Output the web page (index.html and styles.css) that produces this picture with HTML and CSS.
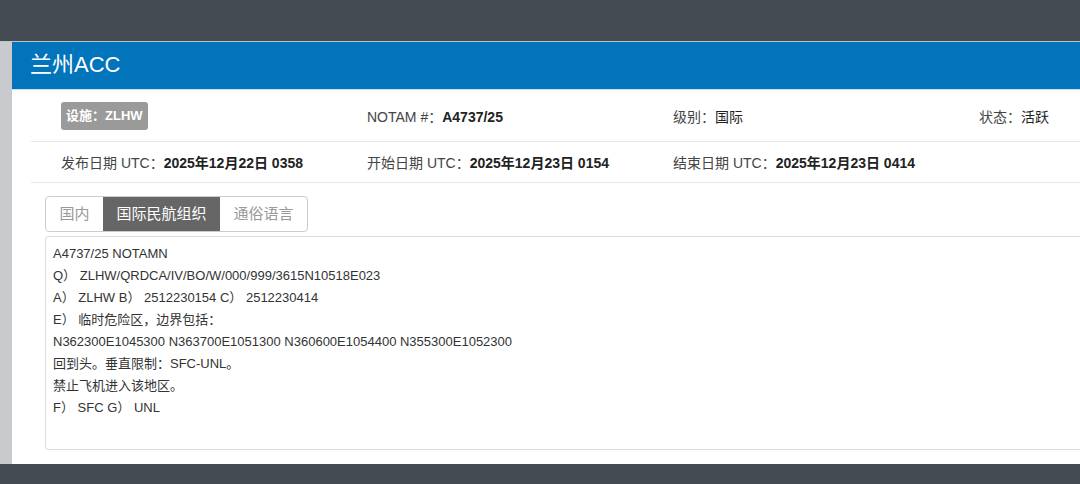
FILE: index.html
```html
<!DOCTYPE html>
<html lang="zh-CN">
<head>
    <meta charset="UTF-8">
    <meta name="viewport" content="width=device-width, initial-scale=1.0">
    <title>兰州ACC</title>
    <link rel="stylesheet" href="styles.css">
</head>
<body>
    <div class="topbar"></div>
    <div class="page">
        <div class="panel">
            <div class="panel-head">兰州ACC</div>
            <div class="panel-body">
                <div class="info-row first">
                    <div class="cell"><span class="badge">设施：ZLHW</span></div>
                    <div class="cell">NOTAM #：<b>A4737/25</b></div>
                    <div class="cell">级别：<span class="val">国际</span></div>
                    <div class="cell">状态：<span class="val">活跃</span></div>
                </div>
                <div class="info-row">
                    <div class="cell">发布日期 UTC：<b>2025年12月22日 0358</b></div>
                    <div class="cell">开始日期 UTC：<b>2025年12月23日 0154</b></div>
                    <div class="cell">结束日期 UTC：<b>2025年12月23日 0414</b></div>
                </div>

                <div class="tabs-wrap">
                    <div class="tabs">
                        <span class="tab">国内</span>
                        <span class="tab active">国际民航组织</span>
                        <span class="tab">通俗语言</span>
                    </div>
                    <div class="notam-text">
                        <div>A4737/25 NOTAMN</div>
                        <div>Q） ZLHW/QRDCA/IV/BO/W/000/999/3615N10518E023</div>
                        <div>A） ZLHW B） 2512230154 C） 2512230414</div>
                        <div>E） 临时危险区，边界包括：</div>
                        <div>N362300E1045300 N363700E1051300 N360600E1054400 N355300E1052300</div>
                        <div>回到头。垂直限制：SFC-UNL。</div>
                        <div>禁止飞机进入该地区。</div>
                        <div>F） SFC G） UNL</div>
                    </div>
                </div>
            </div>
        </div>
    </div>
    <div class="bottombar"></div>
</body>
</html>
```

FILE: styles.css
```css
    body {
        font-family: "Liberation Sans", "Noto Sans CJK SC", sans-serif;
        background-color: #454b52;
        margin: 0;
        padding: 0;
        width: 1080px;
        height: 484px;
        overflow: hidden;
        color: #333;
    }

    .topbar {
        height: 41px;
        border-bottom: 1px solid #b9c5ce;
    }

    .page {
        background-color: #c8cacd;
        padding-left: 12px;
    }

    .panel {
        background: #ffffff;
        height: 422px;
        box-sizing: border-box;
    }

    .panel-head {
        background-color: #0274bb;
        color: white;
        font-size: 22px;
        height: 47px;
        line-height: 46px;
        padding-left: 18px;
        border-bottom: 1px solid #c4e2f4;
    }

    .panel-body {
        padding-left: 19px;
    }

    .info-row {
        display: flex;
        align-items: center;
        height: 40px;
        border-bottom: 1px solid #e8e8e8;
        font-size: 14px;
        color: #444;
    }

    .info-row.first {
        height: 52px;
        padding-top: 1px;
        box-sizing: border-box;
    }

    .cell {
        flex: 0 0 306px;
        padding-left: 30px;
        box-sizing: border-box;
        white-space: nowrap;
    }

    .cell:last-child {
        flex: 1 1 auto;
    }

    .cell b {
        color: #222;
    }

    .val {
        color: #222;
    }

    .badge {
        display: inline-block;
        background-color: #9a9a9a;
        color: white;
        font-size: 13px;
        font-weight: bold;
        height: 28px;
        line-height: 28px;
        padding: 0 5px;
        border-radius: 3px;
    }

    .tabs-wrap {
        margin: 13px 0 0 14px;
    }

    .tabs {
        display: inline-flex;
        border: 1px solid #ccc;
        border-radius: 4px;
        overflow: hidden;
    }

    .tab {
        font-size: 15px;
        color: #999;
        height: 34px;
        line-height: 34px;
        padding: 0 13.5px;
    }

    .tab.active {
        background-color: #666;
        color: white;
    }

    .notam-text {
        margin-top: 4px;
        height: 214px;
        box-sizing: border-box;
        border: 1px solid #ddd;
        border-right: none;
        border-radius: 4px 0 0 4px;
        padding: 6px 7px;
        font-size: 13px;
        line-height: 22px;
        color: #333;
    }

    .bottombar {
        height: 20px;
    }
```
